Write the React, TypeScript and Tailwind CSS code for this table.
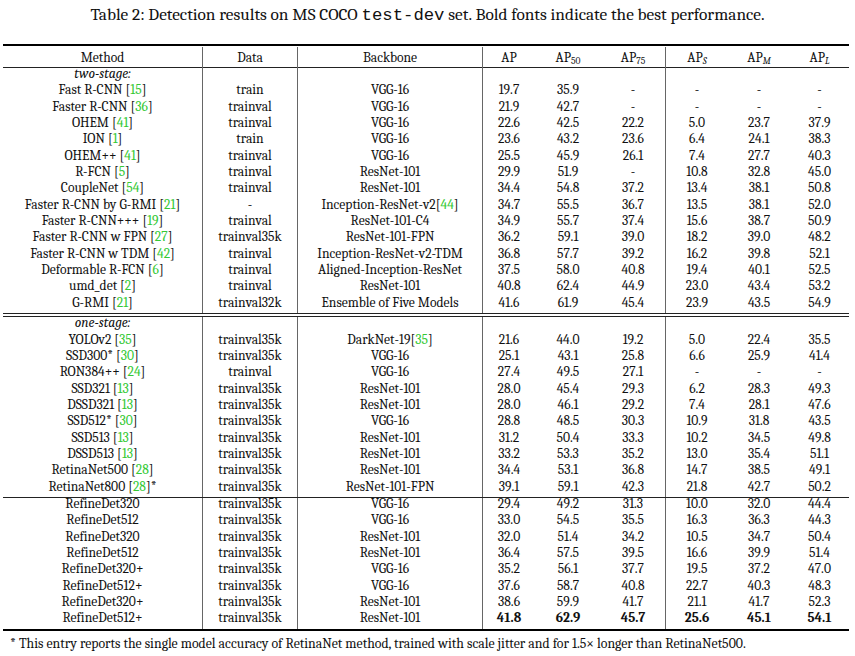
import React from "react";

type Row = string[];

const GRID =
  "grid grid-cols-[200px_95px_185px_52px_66px_65px_62px_62px_59px]";

const TWO_STAGE: Row[] = [
  ["Fast R-CNN [15]", "train", "VGG-16", "19.7", "35.9", "-", "-", "-", "-"],
  ["Faster R-CNN [36]", "trainval", "VGG-16", "21.9", "42.7", "-", "-", "-", "-"],
  ["OHEM [41]", "trainval", "VGG-16", "22.6", "42.5", "22.2", "5.0", "23.7", "37.9"],
  ["ION [1]", "train", "VGG-16", "23.6", "43.2", "23.6", "6.4", "24.1", "38.3"],
  ["OHEM++ [41]", "trainval", "VGG-16", "25.5", "45.9", "26.1", "7.4", "27.7", "40.3"],
  ["R-FCN [5]", "trainval", "ResNet-101", "29.9", "51.9", "-", "10.8", "32.8", "45.0"],
  ["CoupleNet [54]", "trainval", "ResNet-101", "34.4", "54.8", "37.2", "13.4", "38.1", "50.8"],
  ["Faster R-CNN by G-RMI [21]", "-", "Inception-ResNet-v2[44]", "34.7", "55.5", "36.7", "13.5", "38.1", "52.0"],
  ["Faster R-CNN+++ [19]", "trainval", "ResNet-101-C4", "34.9", "55.7", "37.4", "15.6", "38.7", "50.9"],
  ["Faster R-CNN w FPN [27]", "trainval35k", "ResNet-101-FPN", "36.2", "59.1", "39.0", "18.2", "39.0", "48.2"],
  ["Faster R-CNN w TDM [42]", "trainval", "Inception-ResNet-v2-TDM", "36.8", "57.7", "39.2", "16.2", "39.8", "52.1"],
  ["Deformable R-FCN [6]", "trainval", "Aligned-Inception-ResNet", "37.5", "58.0", "40.8", "19.4", "40.1", "52.5"],
  ["umd_det [2]", "trainval", "ResNet-101", "40.8", "62.4", "44.9", "23.0", "43.4", "53.2"],
  ["G-RMI [21]", "trainval32k", "Ensemble of Five Models", "41.6", "61.9", "45.4", "23.9", "43.5", "54.9"],
];

const ONE_STAGE: Row[] = [
  ["YOLOv2 [35]", "trainval35k", "DarkNet-19[35]", "21.6", "44.0", "19.2", "5.0", "22.4", "35.5"],
  ["SSD300* [30]", "trainval35k", "VGG-16", "25.1", "43.1", "25.8", "6.6", "25.9", "41.4"],
  ["RON384++ [24]", "trainval", "VGG-16", "27.4", "49.5", "27.1", "-", "-", "-"],
  ["SSD321 [13]", "trainval35k", "ResNet-101", "28.0", "45.4", "29.3", "6.2", "28.3", "49.3"],
  ["DSSD321 [13]", "trainval35k", "ResNet-101", "28.0", "46.1", "29.2", "7.4", "28.1", "47.6"],
  ["SSD512* [30]", "trainval35k", "VGG-16", "28.8", "48.5", "30.3", "10.9", "31.8", "43.5"],
  ["SSD513 [13]", "trainval35k", "ResNet-101", "31.2", "50.4", "33.3", "10.2", "34.5", "49.8"],
  ["DSSD513 [13]", "trainval35k", "ResNet-101", "33.2", "53.3", "35.2", "13.0", "35.4", "51.1"],
  ["RetinaNet500 [28]", "trainval35k", "ResNet-101", "34.4", "53.1", "36.8", "14.7", "38.5", "49.1"],
  ["RetinaNet800 [28]*", "trainval35k", "ResNet-101-FPN", "39.1", "59.1", "42.3", "21.8", "42.7", "50.2"],
];

const OURS: Row[] = [
  ["RefineDet320", "trainval35k", "VGG-16", "29.4", "49.2", "31.3", "10.0", "32.0", "44.4"],
  ["RefineDet512", "trainval35k", "VGG-16", "33.0", "54.5", "35.5", "16.3", "36.3", "44.3"],
  ["RefineDet320", "trainval35k", "ResNet-101", "32.0", "51.4", "34.2", "10.5", "34.7", "50.4"],
  ["RefineDet512", "trainval35k", "ResNet-101", "36.4", "57.5", "39.5", "16.6", "39.9", "51.4"],
  ["RefineDet320+", "trainval35k", "VGG-16", "35.2", "56.1", "37.7", "19.5", "37.2", "47.0"],
  ["RefineDet512+", "trainval35k", "VGG-16", "37.6", "58.7", "40.8", "22.7", "40.3", "48.3"],
  ["RefineDet320+", "trainval35k", "ResNet-101", "38.6", "59.9", "41.7", "21.1", "41.7", "52.3"],
  ["RefineDet512+", "trainval35k", "ResNet-101", "41.8", "62.9", "45.7", "25.6", "45.1", "54.1"],
];

// columns that carry a vertical rule on their right edge
const RULED = [0, 1, 2, 5];

function Cited({ text }: { text: string }) {
  const parts = text.split(/(\[\d+\])/);
  return (
    <>
      {parts.map((p, i) =>
        /^\[\d+\]$/.test(p) ? (
          <span key={i}>
            [<span className="text-[#35c935]">{p.slice(1, -1)}</span>]
          </span>
        ) : (
          <span key={i}>{p}</span>
        )
      )}
    </>
  );
}

function Cell({ i, children, bold }: { i: number; children?: React.ReactNode; bold?: boolean }) {
  return (
    <div
      className={`text-center whitespace-nowrap ${RULED.includes(i) ? "border-r border-[#666]" : ""} ${
        bold ? "font-bold" : ""
      }`}
    >
      {children}
    </div>
  );
}

function BodyRow({ row, best }: { row: Row; best?: boolean }) {
  return (
    <div className={`${GRID} h-[16.35px] leading-[11px]`}>
      {row.map((v, i) => (
        <Cell key={i} i={i} bold={best && i > 2}>
          <Cited text={v} />
        </Cell>
      ))}
    </div>
  );
}

function GroupLabel({ label }: { label: string }) {
  return (
    <div className={`${GRID} h-[16.35px] leading-[11px]`}>
      {Array.from({ length: 9 }).map((_, i) => (
        <Cell key={i} i={i}>
          {i === 0 && <span className="italic">{label}</span>}
        </Cell>
      ))}
    </div>
  );
}

function Ap({ sub, italic }: { sub?: string; italic?: boolean }) {
  return (
    <>
      AP
      {sub && <sub className={`text-[0.7em] ${italic ? "italic" : ""}`}>{sub}</sub>}
    </>
  );
}

export default function App() {
  const head: React.ReactNode[] = [
    "Method",
    "Data",
    "Backbone",
    <Ap key="ap" />,
    <Ap key="50" sub="50" />,
    <Ap key="75" sub="75" />,
    <Ap key="s" sub="S" italic />,
    <Ap key="m" sub="M" italic />,
    <Ap key="l" sub="L" italic />,
  ];

  return (
    <div className="w-[855px] h-[656px] bg-white text-[#111] font-serif">
      <div className="h-[44px] pt-[4px] text-center text-[17.3px] leading-[20px]">
        Table 2: Detection results on MS COCO{" "}
        <span className="[font-family:Liberation_Mono,monospace] font-light">test-dev</span> set. Bold fonts
        indicate the best performance.
      </div>

      <div className="ml-[3px] w-[846px] text-[13.6px]">
        <div className="h-[2px] bg-black" />
        <div className={`${GRID} h-[21px] leading-[21px] pt-[1px]`}>
          {head.map((h, i) => (
            <Cell key={i} i={i}>
              {h}
            </Cell>
          ))}
        </div>
        <div className="h-px bg-[#222]" />

        <GroupLabel label="two-stage:" />
        {TWO_STAGE.map((r, i) => (
          <BodyRow key={i} row={r} />
        ))}

        <div className="h-px bg-[#222]" />
        <div className="h-[2px]" />
        <div className="h-px bg-[#222]" />

        <GroupLabel label="one-stage:" />
        {ONE_STAGE.map((r, i) => (
          <BodyRow key={i} row={r} />
        ))}

        <div className="h-px bg-[#222]" />

        {OURS.map((r, i) => (
          <BodyRow key={i} row={r} best={i === OURS.length - 1} />
        ))}

        <div className="h-[2px] bg-black" />

        <div className="mt-[6px] pl-[7px] text-[13.8px] leading-[14px] whitespace-nowrap">
          * This entry reports the single model accuracy of RetinaNet method, trained with scale jitter and for
          1.5× longer than RetinaNet500.
        </div>
      </div>
    </div>
  );
}
